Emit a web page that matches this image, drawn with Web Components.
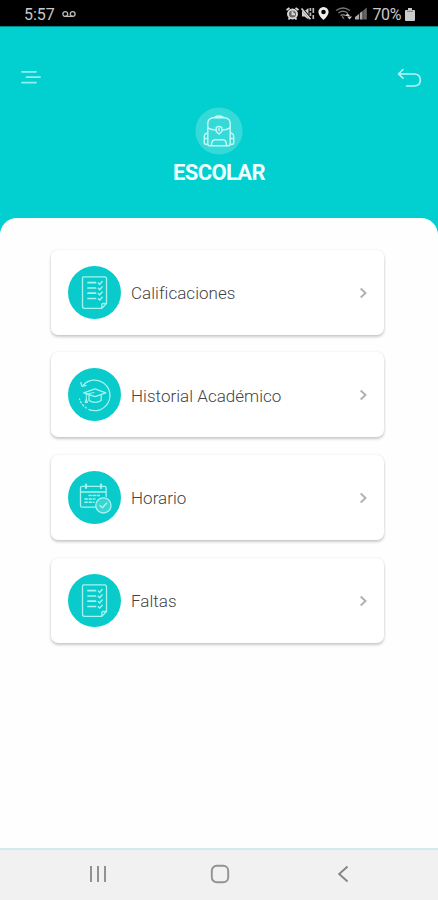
<!DOCTYPE html>
<html lang="es">
<head>
<meta charset="utf-8">
<title>Escolar</title>
<style>
html,body{margin:0;height:100%}
body{font-family:Roboto,"Liberation Sans",sans-serif;background:#fefefe;overflow:hidden}
</style>
</head>
<body>
<escolar-app></escolar-app>
<script>
const ICONS = {
  list: `<g fill="none" stroke="#a5f3ee" stroke-width="1.3" stroke-linejoin="round" stroke-linecap="round"><path d="M15.5 10.8H36.5Q38.5 10.8 38.5 12.8V37.5L33.8 42.3H16.5Q14.5 42.3 14.5 40.3V12Q14.5 10.8 15.5 10.8ZM38.3 37.5H35Q33.8 37.5 33.8 39V42"/><path d="M20 16.7H27.5M20 22H27.5M20 27.2H27.5M20 32.5H27.5" stroke-width="1.7"/><path d="M30.3 17L31.7 18.4 34.2 15.5M30.3 22.3L31.7 23.7 34.2 20.8M30.3 27.5L31.7 28.9 34.2 26M30.3 32.7L31.7 34.1 34.2 31.2" stroke-width="1.4"/></g>`,
  history: `<g fill="none" stroke="#a5f3ee" stroke-width="1.3" stroke-linejoin="round" stroke-linecap="round"><path d="M15.4 17A15.3 15.3 0 1 1 21 41.6"/><path d="M12.8 14.5L14 18.3 18 17.3"/><path d="M18.5 40A15.3 15.3 0 0 1 11.5 31" stroke-dasharray="1.5 2.2"/><path d="M15.7 24.8L27 20.8 37.8 24.8 27 28.7ZM21 27V32.5Q27 36.3 33.2 32.5V27"/><path d="M26 24.6L18.3 26V32.5" stroke-width="1"/><path d="M18.3 31.5L17.2 34.4H19.3Z"/></g>`,
  calendar: `<g fill="none" stroke="#a5f3ee" stroke-width="1.3" stroke-linejoin="round" stroke-linecap="round"><path d="M28 36.2H14Q12.5 36.2 12.5 34.7V16.8Q12.5 15.3 14 15.3H36.6Q38.1 15.3 38.1 16.8V25.5M12.5 21H38.1"/><path d="M18 13.5V17M33 13.5V17" stroke-width="2.2"/><path d="M21 24.5H32M17 28H27M17 31.3H26" stroke-width="1.4" stroke-dasharray="2.3 1.8"/><circle cx="35.4" cy="34.4" r="7.6" fill="#35d6d4"/><path d="M32 34.5L34.4 36.8 38.8 32" stroke-width="1.5"/></g>`
};

function define(name, html, setup) {
  customElements.define(name, class extends HTMLElement {
    connectedCallback() {
      if (this.shadowRoot) return;
      const t = document.createElement('template');
      t.innerHTML = html;
      const root = this.attachShadow({mode: 'open'});
      root.append(t.content.cloneNode(true));
      if (setup) setup(this, root);
    }
  });
}

define('status-bar', `
<style>
:host{display:flex;box-sizing:border-box;height:26px;padding:3px 23px 0 24px;background:#000;color:#c9c9c9;font-size:16px;line-height:23px;justify-content:space-between}
div{display:flex;align-items:center}
svg{display:block}
</style>
<div><span>5:57</span>
<svg width="14" height="8" viewBox="0 0 14 8" style="margin:-2px 0 0 7px" fill="none" stroke="#bbb" stroke-width="1.3"><circle cx="3.3" cy="4" r="2.4"/><circle cx="10.7" cy="4" r="2.4"/><path d="M3 6.4H11"/></svg></div>
<div>
<svg width="83" height="15" viewBox="287 6 83 15" style="margin:-2px 3px 0 0" fill="none">
<circle cx="293.5" cy="14" r="5" fill="#666"/>
<g stroke="#d8d8d8" stroke-width="1.9"><circle cx="293.5" cy="14" r="4.5"/><path d="M287.5 10L290.5 8M296.5 8L299.5 10M289.5 19.5L290.8 18M297.5 19.5L296.2 18M293.5 11.3V14.3H296"/></g>
<path d="M303 11H305.5L309.5 8V19.5L305.5 16.5H303Z" fill="#cfcfcf"/><path d="M302.5 8L312 19" stroke="#000" stroke-width="2.4"/><path d="M302.5 8.5L311.5 19.2" stroke="#ddd" stroke-width="1.5"/><path d="M311.4 8V11M311.4 12.5V16M314.3 8V13M314.3 15V19" stroke="#bbb" stroke-width="1.7"/>
<path fill-rule="evenodd" d="M324.5 7A5 5 0 0 0 319.4 12.2C319.4 15.5 324.5 20 324.5 20S329.6 15.5 329.6 12.2A5 5 0 0 0 324.5 7ZM324.5 9.8A2.2 2.2 0 1 1 324.5 14.3 2.2 2.2 0 0 1 324.5 9.8Z" fill="#eee"/>
<g stroke="#777" stroke-width="1.5"><path d="M337.2 10.5Q344 5.5 350.8 10.5M339.4 13Q344 9.7 348.5 13M341.5 15.5Q344 14 346.3 15.5"/></g><path d="M344 16L345.5 19.5 342.5 17Z" fill="#888"/><path d="M348.5 13.2L346 16H351ZM348 16.5H353L350.5 19.5Z" fill="#ccc"/>
<path d="M356 19.5V17L360 14V19.5ZM360.8 19.5V13L363.6 11V19.5Z" fill="#aaa"/><path d="M364.2 19.5V10.5L367.8 7.5V19.5Z" fill="#666"/>
</svg>
<span style="letter-spacing:-.4px">70%</span>
<svg width="10" height="13" viewBox="0 0 10 13" style="margin:-1px 0 0 4px"><path d="M3 0H7V2H9Q10 2 10 3V12Q10 13 9 13H1Q0 13 0 12V3Q0 2 1 2H3Z" fill="#ccc"/><path d="M2 3.3H8" stroke="#777"/></svg>
</div>`);

define('page-header', `
<style>
:host{display:grid;grid-template-columns:40px 1fr 40px;height:192px;background:#02cfd0;border-top:1px solid #028788;box-sizing:border-box;color:#fff}
.menu{margin:43px 0 0 21px}.back{margin:41px 0 0 -1px}
.brand{display:flex;flex-direction:column;align-items:center;padding-top:80px}
h1{margin:4px 0 0;font-size:22px;line-height:27px;font-weight:700;letter-spacing:-.65px;color:#effffd}
svg{display:block}
</style>
<svg class="menu" width="21" height="15" viewBox="0 0 21 15" stroke="#92f1ef" stroke-width="1.8" stroke-linecap="round"><path d="M1 1.8H15M5.5 7.2H19M1 12.6H15"/></svg>
<div class="brand">
<svg width="48" height="48" viewBox="0 0 48 48"><circle cx="24" cy="24" r="23.6" fill="#35d9d8"/>
<g fill="none" stroke="#c4fbf7" stroke-width="1.4" stroke-linejoin="round" stroke-linecap="round"><path d="M12.8 37V16.5Q13 11.5 18 10.8H30Q35 11.5 35.2 16.5V37Q35.2 38.8 33.5 38.8H14.5Q12.8 38.8 12.8 37ZM19.5 10.3Q24 7.8 28.5 10.3M13 20.5Q15 22.8 21 22.8M27.2 22.8Q33 22.8 35 20.5"/><path d="M21.2 20.5Q24 18.5 26.8 20.5V24.5L24 27 21.2 24.5ZM24 21.5V23.5M16.5 38.5Q16.5 32.8 20 32.8H28Q31.5 32.8 31.5 38.5M12.5 26Q9.2 26.5 9.3 30V36Q9.3 37.5 12.5 37.5M35.5 26Q38.8 26.5 38.7 30V36Q38.7 37.5 35.5 37.5M9.5 31.5H12.5M35.5 31.5H38.5"/></g></svg>
<h1><slot></slot></h1></div>
<svg class="back" width="26" height="20" viewBox="0 0 26 20" fill="none" stroke="#b8f7f4" stroke-width="1.6" stroke-linecap="round" stroke-linejoin="round"><path d="M6 1.5L1.5 6 6 10.2M1.8 6H17Q23.3 6 23.3 12T17 18H9.5"/></svg>`);

define('menu-card', `
<style>
:host{display:flex;align-items:center;box-sizing:border-box;height:85px;padding:0 16px 0 16.5px;border-radius:7px;background:#fff;box-shadow:0 2px 3px rgba(0,0,0,.2),0 0 2px rgba(0,0,0,.1)}
.icon{width:53px;height:53px;flex:none;border-radius:50%;background:#0acbcb}
.icon svg{display:block}
.label{flex:1;margin-left:10.5px;padding-top:2px;font-size:17px;letter-spacing:.03px;font-weight:300;color:#444;white-space:nowrap;line-height:24px}
.chev{margin-top:1px}
</style>
<div class="icon"><svg width="53" height="53" viewBox="0 0 53 53"></svg></div>
<span class="label"><slot></slot></span>
<svg class="chev" width="9" height="12" viewBox="0 0 9 12" fill="none" stroke="#b2b2b2" stroke-width="2"><path d="M1.7 1.5L6.5 6 1.7 10.5"/></svg>`,
(el, root) => { root.querySelector('.icon svg').innerHTML = ICONS[el.getAttribute('icon')]; });

define('nav-bar', `
<style>
:host{display:grid;grid-template-columns:1fr 1fr 1fr;box-sizing:border-box;height:52px;padding:0 36px 2px;background:#f1f1f1;border-top:2px solid #d1edeb;align-items:center;justify-items:center}
svg{display:block}
</style>
<svg width="18" height="18" viewBox="0 0 18 18" stroke="#929292" stroke-width="2" style="margin-left:1px"><path d="M2 1V17M9 1V17M16 1V17"/></svg>
<svg width="20" height="20" viewBox="0 0 20 20" fill="none" stroke="#929292" stroke-width="1.9" style="margin-left:2px"><rect x="1.8" y="1.8" width="16.4" height="16.4" rx="5"/></svg>
<svg width="12" height="18" viewBox="0 0 12 18" fill="none" stroke="#858585" stroke-width="1.9" style="margin-left:3px"><path d="M10.5 1.5L2.2 9 10.5 16.5"/></svg>`);

define('escolar-app', `
<style>
:host{display:flex;flex-direction:column;height:900px;width:438px}
.under{flex:1;background:#02cfd0;display:flex}
main{flex:1;background:#fefefe;border-radius:17px 17px 0 0;padding:31.5px 54px 0 51px;display:flex;flex-direction:column;gap:17.7px}
</style>
<status-bar></status-bar>
<page-header>ESCOLAR</page-header>
<div class="under"><main>
<menu-card icon="list">Calificaciones</menu-card>
<menu-card icon="history">Historial Académico</menu-card>
<menu-card icon="calendar">Horario</menu-card>
<menu-card icon="list">Faltas</menu-card>
</main></div>
<nav-bar></nav-bar>`);
</script>
</body>
</html>
